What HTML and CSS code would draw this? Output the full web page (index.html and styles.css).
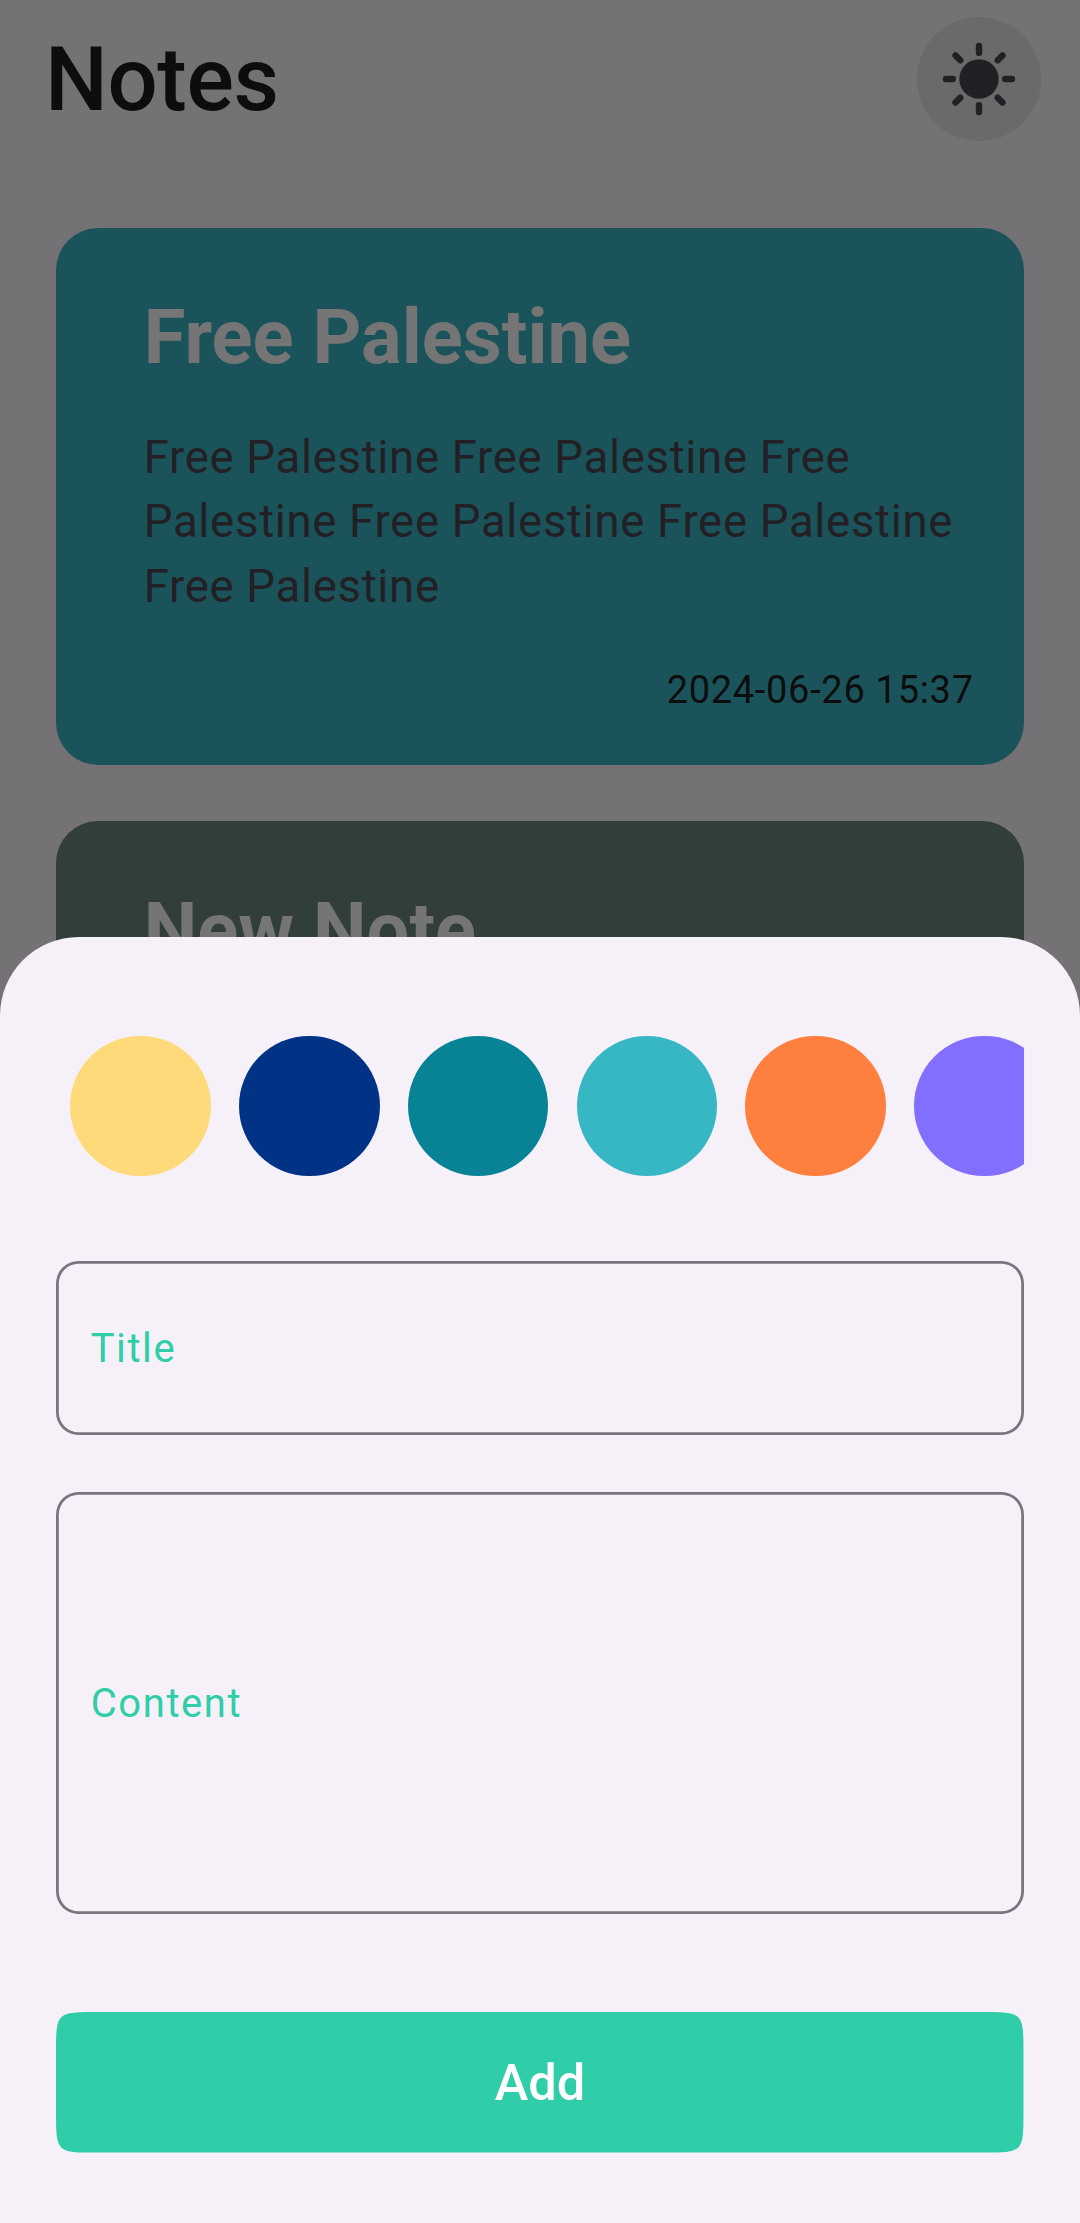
FILE: index.html
```html
<!DOCTYPE html>
<html lang="en">
<head>
<meta charset="utf-8">
<title>Notes</title>
<link rel="stylesheet" href="styles.css">
</head>
<body>
<main class="page">
  <header class="topbar">
    <h1 class="topbar-title">Notes</h1>
    <button class="theme-toggle" aria-label="Toggle theme">
      <svg class="sun" viewBox="-37 -37 74 74">
        <circle r="19.7" fill="currentColor"/>
        <path d="M0-26.2V-33M0 26.2V33M-26.2 0H-33M26.2 0H33M18.7-18.7L23.5-23.5M18.7 18.7L23.5 23.5M-18.7 18.7L-23.5 23.5M-18.7-18.7L-23.5-23.5" stroke="currentColor" stroke-width="6.4" stroke-linecap="round"/>
      </svg>
    </button>
  </header>
  <section class="notes">
    <article class="note note-teal">
      <h2 class="note-title">Free Palestine</h2>
      <p class="note-body">Free Palestine Free Palestine Free Palestine Free Palestine Free Palestine Free Palestine</p>
      <time class="note-date">2024-06-26 15:37</time>
    </article>
    <article class="note note-green">
      <h2 class="note-title">New Note</h2>
    </article>
  </section>
</main>
<section class="sheet">
  <div class="swatches">
    <span class="swatch yellow"></span>
    <span class="swatch navy"></span>
    <span class="swatch teal"></span>
    <span class="swatch cyan"></span>
    <span class="swatch orange"></span>
    <span class="swatch purple"></span>
  </div>
  <div class="field field-title"><span>Title</span></div>
  <div class="field field-content"><span>Content</span></div>
  <button class="add">
    <svg class="add-shape" viewBox="0 0 967.5 140.6">
      <path d="M0 42.2C0 0 0 0 42.2 0H925.3C967.5 0 967.5 0 967.5 42.2V98.4C967.5 140.6 967.5 140.6 925.3 140.6H42.2C0 140.6 0 140.6 0 98.4Z" fill="#2fcda8"/>
    </svg>
    <span class="add-label">Add</span>
  </button>
</section>
</body>
</html>
```
FILE: styles.css
```css
* { box-sizing: border-box; margin: 0; padding: 0; }

body {
  height: 2223px;
  overflow: hidden;
  background: #757275;
  font-family: Roboto, "Liberation Sans", sans-serif;
}

button { border: 0; background: none; font: inherit; }

.topbar {
  display: flex;
  align-items: center;
  justify-content: space-between;
  height: 140.75px;
  padding: 17px 39.3px 0 45px;
}

.topbar-title {
  padding-top: 2px;
  font-size: 88.6px;
  font-weight: 500;
  line-height: 112px;
  letter-spacing: -0.4px;
  color: #0d0d0e;
}

.theme-toggle {
  display: grid;
  place-items: center;
  width: 123.75px;
  height: 123.75px;
  border-radius: 50%;
  background: #6a6a6a;
  color: #232025;
}

.sun { display: block; width: 74px; height: 74px; }

.notes {
  display: flex;
  flex-direction: column;
  gap: 56.25px;
  padding: 87.5px 56.25px 0;
}

.note {
  display: flex;
  flex-direction: column;
  height: 536.8px;
  padding: 60px 50px 0 87.5px;
  border-radius: 42.2px;
}

.note-teal { background: #1a545a; }
.note-green { background: #323e38; }

.note-title { font-size: 75.94px; font-weight: 700; line-height: 100px; color: #757575; }

.note-body {
  margin-top: 37.4px;
  font-size: 45.5px;
  line-height: 64.6px;
  letter-spacing: 0.7px;
  color: #232025;
}

.note-date {
  align-self: flex-end;
  margin-top: 42.5px;
  font-size: 38px;
  line-height: 56px;
  letter-spacing: 0.7px;
  color: #0d0d0e;
}

.sheet {
  position: fixed;
  inset: 937.4px 0 0;
  padding: 98.4px 56.25px 0;
  border-radius: 78.75px 78.75px 0 0;
  background: #f6f1f9;
}

.swatches {
  display: flex;
  gap: 28.125px;
  padding-left: 14.06px;
  overflow: hidden;
}

.swatch { flex: none; width: 140.625px; height: 140.625px; border-radius: 50%; }
.yellow { background: #feda7a; }
.navy { background: #003285; }
.teal { background: #088395; }
.cyan { background: #37b7c3; }
.orange { background: #ff7f3e; }
.purple { background: #836fff; }

.field {
  display: flex;
  align-items: center;
  padding: 1px 34.4px 0;
  border-radius: 22.5px;
  box-shadow: inset 0 0 0 2.8px #79747e;
  font-size: 40px;
  letter-spacing: 1.6px;
  color: #2fcda8;
}

.field-title { height: 174.4px; margin-top: 84.6px; }
.field-content { height: 421.9px; margin-top: 56.25px; }

.add {
  position: relative;
  display: flex;
  align-items: center;
  justify-content: center;
  width: 100%;
  height: 140.6px;
  margin-top: 98.6px;
}

.add-shape { position: absolute; inset: 0; width: 100%; height: 100%; }

.add-label { position: relative; font-size: 50.6px; font-weight: 500; color: #fff; }
```
